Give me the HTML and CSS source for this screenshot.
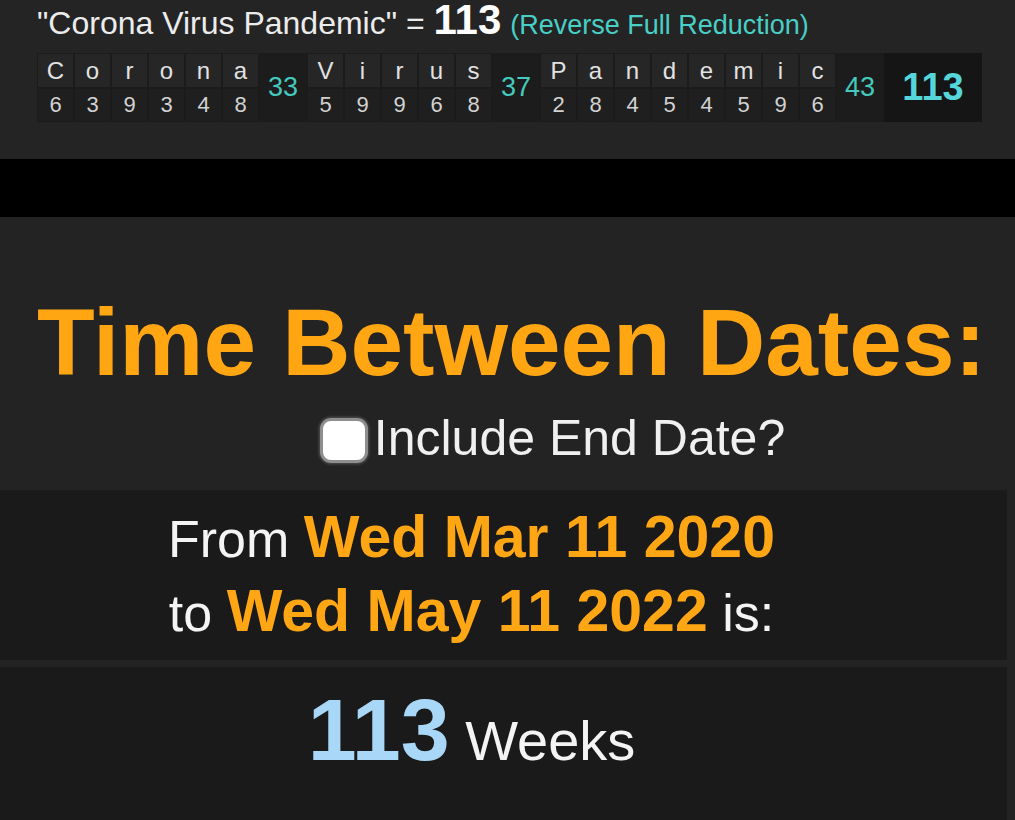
FILE: index.html
```html
<!DOCTYPE html>
<html lang="en">
<head>
<meta charset="utf-8">
<title>Time Between Dates</title>
<link rel="stylesheet" href="styles.css">
</head>
<body>
<section class="gematria">
  <div class="headline">"Corona Virus Pandemic" = <b class="total">113</b> <span class="cipher">(Reverse Full Reduction)</span></div>
  <div class="breakdown">
    <span class="ch">C</span><span class="ch">o</span><span class="ch">r</span><span class="ch">o</span><span class="ch">n</span><span class="ch">a</span>
    <span class="sum s1">33</span>
    <span class="ch">V</span><span class="ch">i</span><span class="ch">r</span><span class="ch">u</span><span class="ch">s</span>
    <span class="sum s2">37</span>
    <span class="ch">P</span><span class="ch">a</span><span class="ch">n</span><span class="ch">d</span><span class="ch">e</span><span class="ch">m</span><span class="ch">i</span><span class="ch">c</span>
    <span class="sum s3">43</span>
    <span class="grand">113</span>
    <span class="num">6</span><span class="num">3</span><span class="num">9</span><span class="num">3</span><span class="num">4</span><span class="num">8</span>
    <span class="num">5</span><span class="num">9</span><span class="num">9</span><span class="num">6</span><span class="num">8</span>
    <span class="num">2</span><span class="num">8</span><span class="num">4</span><span class="num">5</span><span class="num">4</span><span class="num">5</span><span class="num">9</span><span class="num">6</span>
  </div>
</section>
<div class="band"></div>
<section class="calc">
  <h1 class="title">Time Between Dates:</h1>
  <label class="option"><input type="checkbox" class="check"><span>Include End Date?</span></label>
</section>
<section class="panel dates">
  <div class="line">From <b class="date">Wed Mar 11 2020</b></div>
  <div class="line">to <b class="date">Wed May 11 2022</b> is:</div>
</section>
<section class="panel result">
  <div class="line"><b class="count">113</b> Weeks</div>
</section>
</body>
</html>
```

FILE: styles.css
```css
* { box-sizing: border-box; }

html, body {
  margin: 0;
  padding: 0;
  background: #232323;
  color: #f2f2f2;
  font-family: "Liberation Sans", Arial, sans-serif;
}

.gematria {
  height: 159px;
  padding: 2px 0 0 37px;
  background: #242424;
}

.headline {
  height: 39px;
  font-size: 32px;
  line-height: 36px;
  color: #ececec;
  white-space: nowrap;
}

.headline .total {
  font-size: 42px;
  line-height: 36px;
  font-weight: bold;
  color: #ffffff;
}

.headline .cipher {
  font-size: 27px;
  color: #48cfc6;
}

.breakdown {
  margin-top: 12px;
  display: grid;
  grid-template-columns: repeat(6, 37px) 48px repeat(5, 37px) 48px repeat(8, 37px) 48px 98px;
  grid-template-rows: 35px 34px;
  width: 945px;
  background: #1b1b1b;
}

.ch {
  grid-row: 1;
  background: #262626;
  border: 1px solid #1b1b1b;
  color: #e2e2e2;
  font-size: 24px;
  line-height: 33px;
  text-align: center;
}

.num {
  grid-row: 2;
  background: #1f1f1f;
  border: 1px solid #1b1b1b;
  color: #d2d2d2;
  font-size: 22px;
  line-height: 31px;
  text-align: center;
}

.sum, .grand {
  grid-row: 1 / span 2;
  display: flex;
  align-items: center;
  justify-content: center;
}

.sum {
  background: #1c1c1c;
  border: 1px solid #1b1b1b;
  color: #45c9be;
  font-size: 27px;
}

.s1 { grid-column: 7; }
.s2 { grid-column: 13; }
.s3 { grid-column: 22; }

.grand {
  grid-column: 23;
  background: #151515;
  color: #54d6da;
  font-size: 38px;
  font-weight: bold;
}

.band {
  height: 58px;
  background: #000000;
}

.calc {
  height: 273px;
  padding-top: 70px;
  background: #232323;
}

.title {
  margin: 0;
  padding-left: 8px;
  font-size: 94.5px;
  line-height: 110px;
  font-weight: bold;
  color: #ffa612;
  text-align: center;
  white-space: nowrap;
}

.option {
  margin-top: 13px;
  height: 56px;
  display: flex;
  align-items: center;
  justify-content: center;
  padding-left: 90px;
  font-size: 50px;
  line-height: 56px;
  color: #f0f0f0;
}

.check {
  appearance: none;
  -webkit-appearance: none;
  margin: 4px 6px 0 0;
  width: 48px;
  height: 45px;
  border: 3px solid #8e8e8e;
  border-radius: 11px;
  background: #ffffff;
  box-shadow: 0 0 3px 1px #555;
}

.panel {
  margin-right: 8px;
  background: #1a1a1a;
  text-align: center;
  padding-right: 64px;
}

.dates {
  height: 170px;
  margin-bottom: 7px;
  padding-top: 12px;
  font-size: 52px;
  line-height: 74px;
  color: #f4f4f4;
}

.date {
  font-size: 59px;
  line-height: 1;
  font-weight: bold;
  color: #ffa614;
}

.result {
  height: 153px;
  padding-top: 24px;
  font-size: 56px;
  line-height: 100px;
  color: #f4f4f4;
}

.count {
  font-size: 88px;
  line-height: 0.8;
  font-weight: bold;
  color: #a8d7f8;
}
```
